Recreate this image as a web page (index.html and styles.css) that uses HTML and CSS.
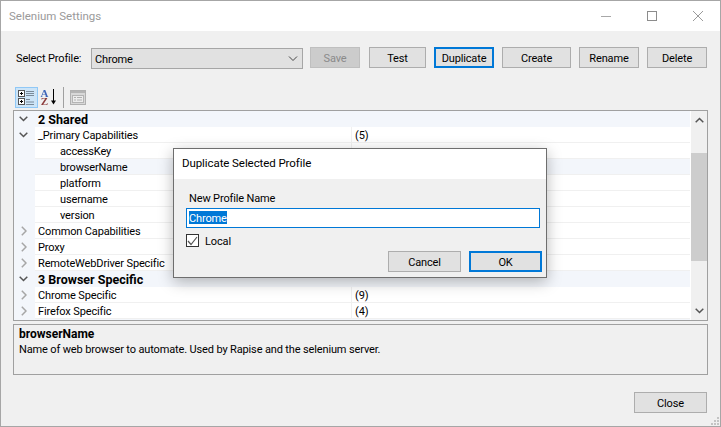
FILE: index.html
```html
<!DOCTYPE html>
<html lang="en">
<head>
  <meta charset="UTF-8">
  <title>Selenium Settings</title>
  <link rel="stylesheet" href="styles.css">
</head>
<body>
  <div class="window">
    <div class="titlebar">
      <span class="title">Selenium Settings</span>
      <div class="controls">
        <svg width="12" height="12" viewBox="0 0 12 12"><path d="M1 6.500h10" stroke="#a8a8a8" fill="none"/></svg>
        <svg width="12" height="12" viewBox="0 0 12 12"><rect x="1.500" y="1.500" width="9" height="9" stroke="#8c8c8c" fill="none"/></svg>
        <svg width="12" height="12" viewBox="0 0 12 12"><path d="M1 1l10 10M11 1L1 11" stroke="#9a9a9a" fill="none"/></svg>
      </div>
    </div>
    <div class="content">
      <div class="profile-row">
        <label class="profile-label">Select Profile:</label>
        <div class="select">
          <span class="select-text">Chrome</span>
          <svg width="10" height="6" viewBox="0 0 10 6"><path d="M1 .5l4 4 4-4" stroke="#444" fill="none"/></svg>
        </div>
        <button class="btn btn-save" disabled>Save</button>
        <button class="btn btn-test">Test</button>
        <button class="btn btn-dup focused">Duplicate</button>
        <button class="btn btn-create">Create</button>
        <button class="btn btn-rename">Rename</button>
        <button class="btn btn-delete">Delete</button>
      </div>

      <div class="toolbar">
        <div class="tool active">
          <svg width="17" height="17" viewBox="0 0 17 17">
            <rect x=".5" y="1.500" width="6" height="6" fill="#fff" stroke="#555"/>
            <path d="M2 4.500h3M3.500 3v3" stroke="#000"/>
            <rect x=".5" y="9.500" width="6" height="6" fill="#fff" stroke="#555"/>
            <path d="M2 12.500h3M3.500 11v3" stroke="#000"/>
            <path d="M8 2.500h8M8 4.500h8M8 6.500h8M8 10.500h4M8 13h8M8 15.500h8" stroke="#7a8a99" fill="none"/>
          </svg>
        </div>
        <div class="tool tool-sort">
          <span class="sort-letters">A Z</span>
          <svg class="sort-arrow" width="7" height="16" viewBox="0 0 7 16">
            <path d="M3.500 0v13" stroke="#000"/>
            <path d="M1 11.500h5L3.500 15.500z" fill="#000"/>
          </svg>
        </div>
        <div class="tool-sep"></div>
        <div class="tool-page">
          <svg width="16" height="15" viewBox="0 0 16 15">
            <rect x=".5" y=".5" width="15" height="14" fill="#d8d8d8" stroke="#b0b0b0"/>
            <rect x="1" y="1" width="14" height="2" fill="#b4b4b4"/>
            <rect x="2.500" y="5.500" width="11" height="7" fill="#ececec" stroke="#b4b4b4"/>
            <path d="M4 7.500h2M7 7.500h5M4 10h2M7 10h5" stroke="#b0b0b0"/>
          </svg>
        </div>
      </div>

      <div class="grid">
        <div class="rows">
          <div class="row group"><span class="arrow"><svg width="9" height="6" viewBox="0 0 9 6"><path d="M.7.700l3.800 3.800L8.300.700" stroke="#555" stroke-width="1.500" fill="none"/></svg></span><span class="name">2 Shared</span></div>
          <div class="row"><span class="arrow"><svg width="9" height="6" viewBox="0 0 9 6"><path d="M.7.700l3.800 3.800L8.300.700" stroke="#555" stroke-width="1.500" fill="none"/></svg></span><span class="name">_Primary Capabilities</span><span class="value">(5)</span></div>
          <div class="row child"><span class="arrow"></span><span class="name">accessKey</span><span class="value"></span></div>
          <div class="row child selected"><span class="arrow"></span><span class="name">browserName</span><span class="value"></span></div>
          <div class="row child"><span class="arrow"></span><span class="name">platform</span><span class="value"></span></div>
          <div class="row child"><span class="arrow"></span><span class="name">username</span><span class="value"></span></div>
          <div class="row child"><span class="arrow"></span><span class="name">version</span><span class="value"></span></div>
          <div class="row"><span class="arrow"><svg class="right" width="6" height="10" viewBox="0 0 6 10"><path d="M.8.800L5 5 .8 9.200" stroke="#a6a6a6" stroke-width="1.500" fill="none"/></svg></span><span class="name">Common Capabilities</span><span class="value"></span></div>
          <div class="row"><span class="arrow"><svg class="right" width="6" height="10" viewBox="0 0 6 10"><path d="M.8.800L5 5 .8 9.200" stroke="#a6a6a6" stroke-width="1.500" fill="none"/></svg></span><span class="name">Proxy</span><span class="value"></span></div>
          <div class="row"><span class="arrow"><svg class="right" width="6" height="10" viewBox="0 0 6 10"><path d="M.8.800L5 5 .8 9.200" stroke="#a6a6a6" stroke-width="1.500" fill="none"/></svg></span><span class="name">RemoteWebDriver Specific</span><span class="value"></span></div>
          <div class="row group"><span class="arrow"><svg width="9" height="6" viewBox="0 0 9 6"><path d="M.7.700l3.800 3.800L8.300.700" stroke="#555" stroke-width="1.500" fill="none"/></svg></span><span class="name">3 Browser Specific</span></div>
          <div class="row"><span class="arrow"><svg class="right" width="6" height="10" viewBox="0 0 6 10"><path d="M.8.800L5 5 .8 9.200" stroke="#a6a6a6" stroke-width="1.500" fill="none"/></svg></span><span class="name">Chrome Specific</span><span class="value">(9)</span></div>
          <div class="row"><span class="arrow"><svg class="right" width="6" height="10" viewBox="0 0 6 10"><path d="M.8.800L5 5 .8 9.200" stroke="#a6a6a6" stroke-width="1.500" fill="none"/></svg></span><span class="name">Firefox Specific</span><span class="value">(4)</span></div>
        </div>
        <div class="scrollbar">
          <svg width="9" height="6" viewBox="0 0 9 6"><path d="M.7 5.300L4.500 1.500l3.800 3.800" stroke="#555" stroke-width="1.500" fill="none"/></svg>
          <div class="track"><div class="thumb"></div></div>
          <svg width="9" height="6" viewBox="0 0 9 6"><path d="M.7.700l3.800 3.800L8.300.700" stroke="#555" stroke-width="1.500" fill="none"/></svg>
        </div>
      </div>

      <div class="help">
        <div class="help-title">browserName</div>
        <div>Name of web browser to automate. Used by Rapise and the selenium server.</div>
      </div>

      <div class="footer">
        <button class="btn btn-close">Close</button>
      </div>
    </div>
    <svg class="grip" width="8" height="8" viewBox="0 0 8 8"><path d="M6 0h2v2H6zM3 3h2v2H3zM6 3h2v2H6zM0 6h2v2H0zM3 6h2v2H3zM6 6h2v2H6z" fill="#c4c4c4"/></svg>
  </div>

  <div class="dialog">
    <div class="dialog-title">Duplicate Selected Profile</div>
    <div class="dialog-body">
      <div class="dialog-label">New Profile Name</div>
      <div class="input"><span class="selection">Chrome</span></div>
      <div class="check-row">
        <span class="checkbox"><svg width="11" height="10" viewBox="0 0 11 10"><path d="M1 5l3 3.500L10 1" stroke="#555" stroke-width="1.200" fill="none"/></svg></span>
        <span class="check-label">Local</span>
      </div>
      <div class="dialog-buttons">
        <button class="btn btn-cancel">Cancel</button>
        <button class="btn btn-ok focused">OK</button>
      </div>
    </div>
  </div>
</body>
</html>
```

FILE: styles.css
```css
* {
  box-sizing: border-box;
}
html, body {
  margin: 0;
  height: 100%;
  overflow: hidden;
}
body {
  font-family: Roboto, "Liberation Sans", Arial, sans-serif;
  font-size: 11px;
  letter-spacing: -0.14px;
  color: #000;
  position: relative;
}
.window {
  position: relative;
  width: 721px;
  height: 427px;
  border: 1px solid #a6a6a6;
  background-color: #f0f0f0;
  display: flex;
  flex-direction: column;
}
.titlebar {
  height: 30px;
  background-color: #fff;
  display: flex;
  align-items: center;
  justify-content: space-between;
  padding: 0 8px 0 8px;
  flex-shrink: 0;
}
.title {
  color: #9a9a9a;
  font-size: 11.5px;
  letter-spacing: 0;
}
.controls {
  display: flex;
  gap: 34px;
  margin-top: -1px;
  margin-right: 8px;
}
.content {
  flex: 1;
  padding: 0 12px 0 12px;
  display: flex;
  flex-direction: column;
}
.profile-row {
  display: flex;
  align-items: flex-start;
  margin-top: 16px;
  height: 22px;
}
.profile-label {
  width: 78px;
  padding: 5px 0 0 3px;
}
.select {
  width: 212px;
  height: 21px;
  margin-top: 1px;
  background-color: #e1e1e1;
  border: 1px solid #a6a6a6;
  display: flex;
  align-items: center;
  justify-content: space-between;
  padding: 0 4px 0 3px;
  margin-right: 7px;
}
.select-text {
  padding-top: 1px;
}
.btn {
  font-family: inherit;
  font-size: 11px;
  letter-spacing: inherit;
  color: #000;
  height: 21px;
  background-color: #e1e1e1;
  border: 1px solid #adadad;
  padding: 2px 0 0;
}
.btn.focused {
  border: 2px solid #0078d7;
}
.btn-save {
  width: 50px;
  margin-right: 9px;
  background-color: #cccccc;
  border-color: #bfbfbf;
  color: #8a8a8a;
}
.btn-test {
  width: 57px;
  margin-right: 8px;
}
.btn-dup {
  width: 60px;
  margin-right: 8px;
}
.btn-create {
  width: 69px;
  margin-right: 8px;
}
.btn-rename {
  width: 60px;
  margin-right: 8px;
}
.btn-delete {
  width: 60px;
}
.toolbar {
  display: flex;
  align-items: center;
  height: 22px;
  margin-top: 17px;
  padding-left: 2px;
}
.tool {
  height: 21px;
  display: flex;
  align-items: center;
  justify-content: center;
  width: 23px;
}
.tool.active {
  background-color: #cce4f7;
  border: 1px solid #90c8f6;
}
.tool-sort {
  justify-content: flex-start;
  padding-left: 2px;
}
.sort-letters {
  width: 9px;
  font-family: "Liberation Serif", serif;
  font-size: 11px;
  font-weight: bold;
  line-height: 8px;
  letter-spacing: 0;
  text-align: center;
  color: transparent;
  background: linear-gradient(#3b63b8 50%, #8c3b3b 50%);
  -webkit-background-clip: text;
  background-clip: text;
}
.sort-arrow {
  margin-left: 1px;
}
.tool-sep {
  width: 1px;
  height: 21px;
  background-color: #a0a0a0;
  margin: 0 6px 0 2px;
}
.tool-page {
  display: flex;
}
.grid {
  margin-top: 2px;
  height: 211px;
  width: 695px;
  border: 1px solid #a0a0a0;
  background-color: #fff;
  display: flex;
  flex-shrink: 0;
}
.rows {
  width: 676px;
  background-color: #f3f6fb;
}
.row {
  height: 16px;
  display: flex;
  align-items: flex-start;
  background-color: #fff;
  box-shadow: inset 0 -1px 0 #f0f0f0;
}
.row .arrow {
  width: 21px;
  height: 16px;
  background-color: #f3f6fb;
  display: flex;
  align-items: center;
  padding-left: 5px;
  flex-shrink: 0;
}
.row .arrow .right {
  margin-left: 2px;
}
.row .name {
  width: 316px;
  padding: 1px 0 0 3px;
  height: 16px;
  line-height: 15px;
  flex-shrink: 0;
  white-space: nowrap;
  overflow: hidden;
}
.row .value {
  flex: 1;
  height: 16px;
  line-height: 16px;
  padding: 1px 0 0 3px;
  border-left: 1px solid #f0f0f0;
}
.row.child .name {
  padding-left: 25px;
}
.row.selected {
  background-color: #f3f6fb;
}
.row.group {
  background-color: #f3f6fb;
  box-shadow: none;
  font-weight: bold;
  font-size: 12.5px;
  letter-spacing: 0;
}
.scrollbar {
  flex: 1;
  background-color: #f0f0f0;
  display: flex;
  flex-direction: column;
  align-items: center;
  padding: 6px 0 6px;
  margin-left: 1px;
}
.track {
  flex: 1;
  align-self: stretch;
  padding-top: 30px;
}
.thumb {
  height: 108px;
  background-color: #cdcdcd;
}
.help {
  margin-top: 3px;
  height: 51px;
  width: 695px;
  border: 1px solid #a0a0a0;
  padding: 2px 5px;
  line-height: 15px;
  flex-shrink: 0;
}
.help-title {
  font-weight: bold;
  font-size: 12px;
  letter-spacing: 0;
}
.footer {
  display: flex;
  justify-content: flex-end;
  margin-top: 17px;
  padding-right: 1px;
}
.btn-close {
  width: 73px;
}
.grip {
  position: absolute;
  right: 1px;
  bottom: 1px;
}
.dialog {
  position: absolute;
  left: 173px;
  top: 148px;
  width: 374px;
  height: 130px;
  border: 1px solid #6e6e6e;
  background-color: #f0f0f0;
  box-shadow: 0 4px 14px rgba(0, 0, 0, 0.28);
  display: flex;
  flex-direction: column;
}
.dialog-title {
  height: 30px;
  background-color: #fff;
  line-height: 28px;
  padding-left: 8px;
  flex-shrink: 0;
  font-size: 11.5px;
  letter-spacing: -0.08px;
}
.dialog-body {
  padding: 12px 4px 0 12px;
  display: flex;
  flex-direction: column;
}
.dialog-label {
  padding-left: 3px;
  line-height: 15px;
}
.input {
  margin-top: 2px;
  width: 354px;
  height: 20px;
  border: 1px solid #0078d7;
  background-color: #fff;
  padding: 2px 0 0 2px;
  display: flex;
  align-items: flex-start;
}
.selection {
  background-color: #0078d7;
  color: #fff;
  height: 13px;
  line-height: 15px;
}
.check-row {
  display: flex;
  align-items: center;
  gap: 6px;
  margin-top: 6px;
  height: 13px;
}
.check-label {
  padding-top: 2px;
}
.checkbox {
  width: 13px;
  height: 13px;
  border: 1px solid #333;
  background-color: #fff;
  display: flex;
  align-items: center;
  justify-content: center;
}
.dialog-buttons {
  display: flex;
  justify-content: flex-end;
  gap: 8px;
  margin-top: 4px;
}
.btn-cancel,
.btn-ok {
  width: 73px;
}
```
